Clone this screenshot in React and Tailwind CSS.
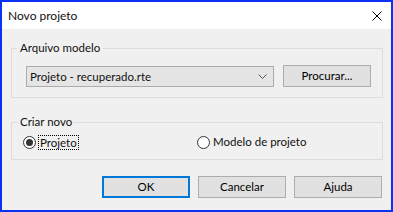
import React from "react";

const Radio = ({ checked }) => (
  <span className="w-[13px] h-[13px] rounded-full border border-[#333333] bg-white flex items-center justify-center shrink-0">
    {checked && <span className="w-[7px] h-[7px] rounded-full bg-[#333333]" />}
  </span>
);

const Button = ({ children, primary }) => (
  <button
    className={
      primary
        ? "w-[88px] h-[22px] bg-[#e1e1e1] border-2 border-[#0078d7] text-black"
        : "w-[88px] h-[22px] bg-[#e1e1e1] border border-[#adadad] text-black"
    }
  >
    {children}
  </button>
);

export default function App() {
  return (
    <div
      className="w-[393px] h-[212px] border-2 border-[#0b31f4] bg-[#f0f0f0] flex flex-col text-[11.5px] leading-[16px] text-[#111111]"
      style={{ fontFamily: 'Lato, "Liberation Sans", sans-serif' }}
    >
      {/* title bar */}
      <div className="h-[27px] bg-white flex items-center justify-between pl-[6px] pr-[9px]">
        <span className="text-[12px]">Novo projeto</span>
        <svg width="10" height="10" viewBox="0 0 10 10" className="mt-[1px]">
          <path d="M0.5 0.5 L9.5 9.5 M9.5 0.5 L0.5 9.5" stroke="#000" strokeWidth="1" fill="none" />
        </svg>
      </div>

      <div className="flex-1 flex flex-col pl-[9px] pr-[8px] pt-[11px]">
        {/* Arquivo modelo */}
        <fieldset className="border border-[#dcdcdc]">
          <legend className="ml-[5px] px-[3px]">Arquivo modelo</legend>
          <div className="flex items-end pl-[14px] pr-[11px] pt-[9px] pb-[10px]">
            <div className="w-[248px] h-[21px] bg-[#e5e5e5] border border-[#acacac] flex items-center justify-between pl-[3px] pr-[6px]">
              <span>Projeto - recuperado.rte</span>
              <svg width="9" height="5" viewBox="0 0 9 5">
                <path d="M0.5 0.5 L4.5 4.5 L8.5 0.5" stroke="#555" strokeWidth="1" fill="none" />
              </svg>
            </div>
            <div className="ml-[9px]">
              <Button>Procurar...</Button>
            </div>
          </div>
        </fieldset>

        {/* Criar novo */}
        <fieldset className="border border-[#dcdcdc] mt-[16px]">
          <legend className="ml-[6px] px-[2px]">Criar novo</legend>
          <div className="flex items-center h-[16px] box-content pl-[11px] pt-[4px] pb-[9px]">
            <label className="flex items-center w-[174px]">
              <Radio checked />
              <span className="ml-[2px] px-[1px] border border-dotted border-black leading-[13px]">Projeto</span>
            </label>
            <label className="flex items-center">
              <Radio />
              <span className="ml-[3px]">Modelo de projeto</span>
            </label>
          </div>
        </fieldset>

        {/* buttons */}
        <div className="flex justify-end gap-[8px] mt-[16px] pr-[1px]">
          <Button primary>OK</Button>
          <Button>Cancelar</Button>
          <Button>Ajuda</Button>
        </div>
      </div>
    </div>
  );
}
